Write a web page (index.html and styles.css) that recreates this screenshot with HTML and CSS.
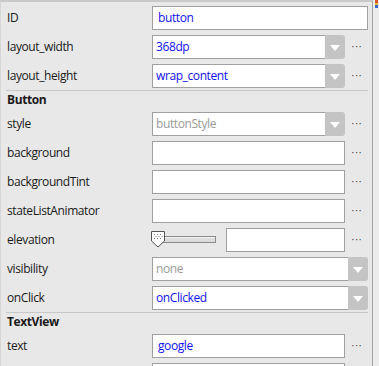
FILE: index.html
```html
<!DOCTYPE html>
<html lang="ko">
<head>
  <meta charset="UTF-8" />
  <title>Properties</title>
  <link rel="stylesheet" href="styles.css">
</head>
<body>
  <div class="window">
    <div class="panel">

      <div class="row">
        <div class="label">ID</div>
        <div class="field wide">button</div>
      </div>
      <div class="row">
        <div class="label">layout_width</div>
        <div class="select"><div class="val">368dp</div><div class="arrow"></div></div>
        <div class="more">···</div>
      </div>
      <div class="row">
        <div class="label">layout_height</div>
        <div class="select"><div class="val">wrap_content</div><div class="arrow"></div></div>
        <div class="more">···</div>
      </div>

      <div class="sep"></div>
      <div class="group">Button</div>

      <div class="row">
        <div class="label">style</div>
        <div class="select disabled"><div class="val">buttonStyle</div><div class="arrow"></div></div>
        <div class="more">···</div>
      </div>
      <div class="row">
        <div class="label">background</div>
        <div class="field"></div>
        <div class="more">···</div>
      </div>
      <div class="row">
        <div class="label">backgroundTint</div>
        <div class="field"></div>
        <div class="more">···</div>
      </div>
      <div class="row">
        <div class="label">stateListAnimator</div>
        <div class="field"></div>
        <div class="more">···</div>
      </div>
      <div class="row">
        <div class="label">elevation</div>
        <div class="slider-cell">
          <div class="slider">
            <div class="track"></div>
            <svg class="thumb" width="15" height="17" viewBox="0 0 15 17">
              <polygon points="0.5,0.5 13.5,0.5 13.5,10 7,16 0.5,10" fill="#fff" stroke="#555" />
              <g fill="#777">
                <rect x="3" y="3" width="1" height="1" /><rect x="6" y="3" width="1" height="1" /><rect x="9" y="3" width="1" height="1" />
                <rect x="4.5" y="5" width="1" height="1" /><rect x="7.5" y="5" width="1" height="1" /><rect x="10.5" y="5" width="1" height="1" />
                <rect x="3" y="7" width="1" height="1" /><rect x="6" y="7" width="1" height="1" /><rect x="9" y="7" width="1" height="1" />
              </g>
            </svg>
          </div>
          <div class="field small"></div>
        </div>
        <div class="more">···</div>
      </div>
      <div class="row">
        <div class="label">visibility</div>
        <div class="select wide disabled"><div class="val">none</div><div class="arrow"></div></div>
      </div>
      <div class="row">
        <div class="label">onClick</div>
        <div class="select wide"><div class="val">onClicked</div><div class="arrow"></div></div>
      </div>

      <div class="sep"></div>
      <div class="group">TextView</div>

      <div class="row">
        <div class="label">text</div>
        <div class="field">google</div>
        <div class="more">···</div>
      </div>
      <div class="row">
        <div class="label"></div>
        <div class="field"></div>
        <div class="more"></div>
      </div>

    </div>
    <div class="side"><div class="mark"></div></div>
  </div>
</body>
</html>
```

FILE: styles.css
```css
body {
  margin: 0;
  background: #e8e8e8;
  font-family: 'Open Sans', 'Noto Sans CJK KR', sans-serif;
  font-size: 12px;
  letter-spacing: -0.4px;
  color: #1a1a1a;
  overflow: hidden;
}

.window {
  display: flex;
  height: 366px;
  overflow: hidden;
}

.panel {
  width: 365px;
  border-top: 2px solid #c9c9c9;
  border-left: 1px solid #d6d6d6;
  border-right: 1px solid #a3a3a3;
  padding: 1px 0 0 6px;
}

.side {
  flex: 1;
  background: #ececec;
  position: relative;
}

.mark {
  position: absolute;
  top: 0;
  right: 1px;
  width: 3px;
  height: 8px;
  background: linear-gradient(#d8562a 0 40%, #e8b43a 40% 65%, #3a66c8 65%);
}

.row {
  display: grid;
  grid-template-columns: 145px 193px 23px;
  height: 29px;
  padding-top: 3px;
  box-sizing: border-box;
}

.label {
  height: 24px;
  line-height: 24px;
  white-space: nowrap;
}

.field {
  box-sizing: border-box;
  height: 24px;
  border: 1px solid #a0a0a0;
  background: #fff;
  color: #1010f0;
  padding: 0 5px;
  line-height: 22px;
}

.wide {
  grid-column: 2 / 4;
}

.select {
  display: flex;
  height: 24px;
}

.select .val {
  flex: 1;
  box-sizing: border-box;
  border: 1px solid #a0a0a0;
  border-right: none;
  background: #fff;
  color: #1010f0;
  padding: 0 3px;
  line-height: 22px;
}

.select.disabled .val {
  color: #9a9a9a;
}

.select .arrow {
  width: 20px;
  background: #c4c4c4;
  border-radius: 0 3px 3px 0;
  display: flex;
  align-items: center;
  justify-content: center;
}

.select .arrow::after {
  content: "";
  border-left: 5px solid transparent;
  border-right: 5px solid transparent;
  border-top: 6px solid #fff;
  margin-top: 1px;
}

.more {
  text-align: center;
  line-height: 23px;
  color: #444;
  font-size: 10px;
  letter-spacing: 1px;
  padding-left: 1px;
}

.slider-cell {
  display: flex;
  gap: 10px;
}

.slider {
  position: relative;
  width: 64px;
}

.track {
  box-sizing: border-box;
  margin: 8px 0 0 1px;
  width: 63px;
  height: 7px;
  border: 1px solid #8a8a8a;
  background: #dcdcdc;
  box-shadow: inset 0 1px 0 #f4f4f4;
}

.thumb {
  position: absolute;
  left: -1px;
  top: 3px;
}

.field.small {
  width: 119px;
}

.sep {
  height: 1px;
  background: #c8c8c8;
  margin-left: -1px;
  width: 362px;
}

.group {
  height: 18px;
  line-height: 18px;
  font-weight: bold;
}
```
